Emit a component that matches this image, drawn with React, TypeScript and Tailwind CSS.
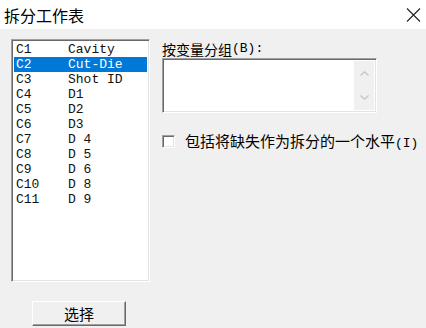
import React from 'react';

const cjk = { fontFamily: '"Noto Sans CJK SC", "Noto Sans", sans-serif' };
const mono = { fontFamily: '"Liberation Mono", "DejaVu Sans Mono", monospace' };

const columns = [
  ['C1', 'Cavity'],
  ['C2', 'Cut-Die'],
  ['C3', 'Shot ID'],
  ['C4', 'D1'],
  ['C5', 'D2'],
  ['C6', 'D3'],
  ['C7', 'D 4'],
  ['C8', 'D 5'],
  ['C9', 'D 6'],
  ['C10', 'D 8'],
  ['C11', 'D 9'],
];

const sunken =
  'border border-t-[#a0a0a0] border-l-[#a0a0a0] border-r-white border-b-white shadow-[inset_1px_1px_0_#696969,inset_-1px_-1px_0_#e3e3e3]';

export default function App() {
  const selected = 1;

  return (
    <div className="flex h-[328px] w-[426px] flex-col overflow-hidden bg-[#f0f0f0] text-black" style={cjk}>
      {/* Title bar */}
      <div className="flex h-[29px] shrink-0 items-center justify-between bg-white pl-[4px] pr-[5px]">
        <span className="text-[16px] leading-none">拆分工作表</span>
        <svg width="15" height="14" viewBox="0 0 15 14">
          <path d="M1 0.5 L14 13.5 M14 0.5 L1 13.5" stroke="#222" strokeWidth="1.1" />
        </svg>
      </div>

      {/* Body */}
      <div className="flex flex-1 pl-[11px] pt-[10px]">
        {/* Left: column list + button */}
        <div className="flex w-[139px] flex-col">
          <div className={`h-[243px] bg-white p-[2px] ${sunken}`}>
            {columns.map(([id, name], i) => (
              <div
                key={id}
                className={`flex h-[15px] items-center pl-[2px] text-[13px] leading-none ${
                  i === selected ? 'bg-[#0078d7] text-white' : 'text-[#111]'
                }`}
                style={mono}
              >
                <span className="w-[52px]">{id}</span>
                <span className="whitespace-pre">{name}</span>
              </div>
            ))}
          </div>
          <div className="ml-[21px] mt-[19px] flex h-[25px] w-[94px] items-center justify-center border border-t-white border-l-white border-r-[#696969] border-b-[#696969] bg-[#f0f0f0] text-[15px] leading-none shadow-[inset_-1px_-1px_0_#a0a0a0]">
            选择
          </div>
        </div>

        {/* Right: group-by box + checkbox */}
        <div className="ml-[12px] flex flex-col">
          <div className="flex h-[19px] items-center text-[14px] leading-none">
            按变量分组<span className="text-[13px]" style={mono}>(B):</span>
          </div>
          <div className={`flex h-[55px] w-[215px] bg-white p-[2px] ${sunken}`}>
            <div className="flex-1" />
            <div className="flex w-[20px] flex-col items-center justify-between bg-[#f0f0f0] py-[10px]">
              <svg width="9" height="5" viewBox="0 0 9 5">
                <path d="M0.5 4.5 L4.5 0.8 L8.5 4.5" fill="none" stroke="#c2c2c2" strokeWidth="1.2" />
              </svg>
              <svg width="9" height="5" viewBox="0 0 9 5">
                <path d="M0.5 0.5 L4.5 4.2 L8.5 0.5" fill="none" stroke="#c2c2c2" strokeWidth="1.2" />
              </svg>
            </div>
          </div>
          <div className="mt-[20px] flex items-center">
            <div className={`h-[13px] w-[13px] bg-white ${sunken}`} />
            <span className="ml-[10px] text-[15px] leading-none">
              包括将缺失作为拆分的一个水平<span className="text-[13px]" style={mono}>(I)</span>
            </span>
          </div>
        </div>
      </div>
    </div>
  );
}
